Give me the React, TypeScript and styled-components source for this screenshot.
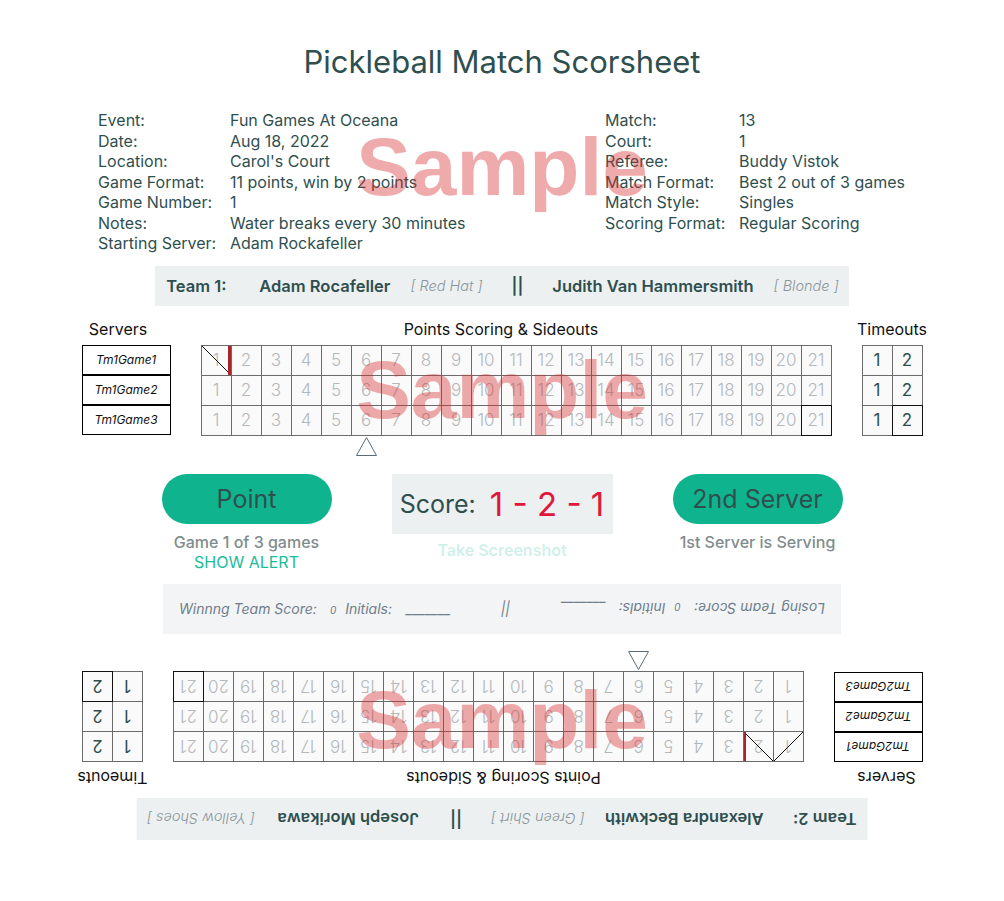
import React from 'react';
import styled, { createGlobalStyle, css } from 'styled-components';

const INK = '#2f4f4f';
const GRID_LINE = '#6b6b6b';

const GlobalStyle = createGlobalStyle`
  * { box-sizing: border-box; }
  html, body { margin: 0; padding: 0; background: #ffffff; }
  body {
    font-family: Inter, "Noto Sans", "Liberation Sans", sans-serif;
    color: ${INK};
  }
`;

const Page = styled.main`
  width: 100%;
  min-height: 901px;
  display: flex;
  flex-direction: column;
  align-items: center;
  padding-top: 42px;
`;

const Title = styled.h1`
  margin: 0;
  font-size: 31px;
  font-weight: 400;
  line-height: 40px;
  color: ${INK};
`;

const Watermark = styled.div<{ $top: number }>`
  position: absolute;
  left: 0;
  right: 0;
  top: ${(p) => p.$top}px;
  text-align: center;
  font-family: "Liberation Sans", Arial, sans-serif;
  font-weight: 700;
  font-size: 82px;
  line-height: 1;
  color: rgba(215, 45, 45, 0.4);
  pointer-events: none;
`;

/* ---------- info ---------- */
const InfoSection = styled.section`
  position: relative;
  align-self: stretch;
  display: grid;
  grid-template-columns: 507px auto;
  padding-left: 98px;
  margin-top: 28px;
`;

const InfoList = styled.dl<{ $labelWidth: number }>`
  margin: 0;
  display: grid;
  grid-template-columns: ${(p) => p.$labelWidth}px auto;
  align-content: start;
  font-size: 16px;
  line-height: 20.5px;
`;

const InfoTerm = styled.dt`
  margin: 0;
`;

const InfoValue = styled.dd`
  margin: 0;
  white-space: nowrap;
`;

/* ---------- team bars ---------- */
const TeamBar = styled.div<{ $flipped?: boolean; $height: number; $gap: number }>`
  display: flex;
  align-items: center;
  height: ${(p) => p.$height}px;
  margin-top: ${(p) => p.$gap}px;
  padding: 0 10px 0 11px;
  background: #ecf0f1;
  font-size: 16.5px;
  white-space: nowrap;
  ${(p) =>
    p.$flipped &&
    css`
      transform: rotate(180deg);
    `}
`;

const TeamLabel = styled.span`
  width: 93px;
  font-weight: 600;
`;

const PlayerName = styled.span<{ $centered?: boolean }>`
  font-weight: 600;
  ${(p) =>
    p.$centered &&
    css`
      min-width: 146px;
      text-align: center;
    `}
`;

const PlayerTag = styled.span`
  margin-left: 20px;
  font-size: 14.5px;
  font-style: italic;
  font-weight: 300;
  color: #8a969b;
`;

const TeamDivider = styled.span`
  margin: 0 29px;
  font-weight: 600;
`;

/* ---------- scoring blocks ---------- */
const BlockWrap = styled.section<{ $gap: number }>`
  position: relative;
  margin-top: ${(p) => p.$gap}px;
`;

const BlockBody = styled.div<{ $flipped?: boolean }>`
  display: flex;
  gap: 30px;
  align-items: flex-start;
  ${(p) =>
    p.$flipped &&
    css`
      transform: rotate(180deg);
    `}
`;

const Column = styled.div`
  display: flex;
  flex-direction: column;
  align-items: flex-start;
`;

const ColumnLabel = styled.div<{ $shift: number }>`
  width: 0;
  min-width: 100%;
  height: 20px;
  line-height: 20px;
  margin-bottom: 6px;
  padding-right: ${(p) => p.$shift * 2}px;
  display: flex;
  justify-content: center;
  white-space: nowrap;
  font-size: 16px;
  color: #111;
`;

const ServerBox = styled.div`
  width: 89px;
  height: 30px;
  border: 1px solid #000;
  display: flex;
  align-items: center;
  justify-content: center;
  font-size: 12px;
  font-style: italic;
  color: #111;
  background: #fff;
`;

const Grid = styled.div<{ $cols: number }>`
  display: grid;
  grid-template-columns: repeat(${(p) => p.$cols}, 30px);
  grid-auto-rows: 30px;
  border-top: 1px solid ${GRID_LINE};
  border-left: 1px solid ${GRID_LINE};
  background: #fafafa;
`;

const Cell = styled.div<{ $dark?: boolean; $strong?: boolean }>`
  position: relative;
  display: flex;
  align-items: center;
  justify-content: center;
  border-right: 1px solid ${GRID_LINE};
  border-bottom: 1px solid ${GRID_LINE};
  font-size: 17px;
  font-weight: ${(p) => (p.$dark ? 400 : 300)};
  color: ${(p) => (p.$dark ? INK : '#b3b8bc')};
  ${(p) =>
    p.$strong &&
    css`
      &::after {
        content: '';
        position: absolute;
        top: -1px;
        left: -1px;
        right: -1px;
        bottom: -1px;
        border: 1px solid #111;
        pointer-events: none;
      }
    `}
`;

const SlashMark = styled.svg`
  position: absolute;
  top: 0;
  left: 0;
  width: 29px;
  height: 29px;
  pointer-events: none;
`;

const SideoutBar = styled.span`
  position: absolute;
  top: 0;
  bottom: 0;
  right: 0;
  width: 2.5px;
  background: #a8262a;
`;

const Pointer = styled.svg<{ $col: number }>`
  display: block;
  margin-top: 1px;
  margin-left: ${(p) => 1 + (p.$col - 1) * 30 + 14.5 - 10.5}px;
`;

/* ---------- actions ---------- */
const ActionRow = styled.section`
  display: flex;
  gap: 60px;
  align-items: flex-start;
  margin-top: 18px;
`;

const ActionCol = styled.div<{ $width: number }>`
  width: ${(p) => p.$width}px;
  display: flex;
  flex-direction: column;
  align-items: center;
`;

const PillButton = styled.button`
  width: 100%;
  height: 50px;
  border: none;
  border-radius: 25px;
  background: #0fb48f;
  color: ${INK};
  font-family: Inter, "Noto Sans", sans-serif;
  font-size: 25px;
  font-weight: 400;
  padding: 0;
  cursor: pointer;
`;

const Caption = styled.div`
  margin-top: 8px;
  font-size: 16px;
  line-height: 20px;
  font-weight: 500;
  color: #7f8c8d;
  white-space: nowrap;
`;

const AlertLink = styled.div`
  font-size: 16px;
  line-height: 20px;
  color: #1abc9c;
`;

const ScoreBox = styled.div`
  width: 100%;
  height: 60px;
  background: #ecf0f1;
  display: flex;
  align-items: center;
  justify-content: center;
  gap: 14px;
`;

const ScoreLabel = styled.span`
  font-size: 25px;
  color: ${INK};
`;

const ScoreValue = styled.span`
  font-size: 33px;
  color: #e0163c;
  white-space: pre;
`;

const ScreenshotLink = styled.div`
  margin-top: 6px;
  font-size: 16px;
  line-height: 20px;
  font-weight: 600;
  color: rgba(26, 188, 156, 0.22);
`;

/* ---------- result bar ---------- */
const ResultBar = styled.section`
  width: 678px;
  height: 50px;
  margin-top: 12px;
  padding: 0 16px;
  background: #f3f4f6;
  display: flex;
  align-items: center;
  justify-content: space-between;
  font-size: 14px;
  font-style: italic;
  color: #6f7e8b;
  white-space: nowrap;
`;

const ResultEntry = styled.div<{ $flipped?: boolean }>`
  display: flex;
  align-items: baseline;
  ${(p) =>
    p.$flipped &&
    css`
      transform: rotate(180deg);
    `}
`;

const TinyScore = styled.span`
  font-size: 10px;
  margin: 0 9px 0 13px;
`;

const InitialsBlank = styled.span`
  margin-left: 14px;
`;

/* ---------- data ---------- */
type Mark = { slash?: 'down' | 'up'; bar?: boolean };

const POINTS = Array.from({ length: 21 }, (_, i) => i + 1);

const topInfoLeft: [string, string][] = [
  ['Event:', 'Fun Games At Oceana'],
  ['Date:', 'Aug 18, 2022'],
  ['Location:', "Carol's Court"],
  ['Game Format:', '11 points, win by 2 points'],
  ['Game Number:', '1'],
  ['Notes:', 'Water breaks every 30 minutes'],
  ['Starting Server:', 'Adam Rockafeller'],
];

const topInfoRight: [string, string][] = [
  ['Match:', '13'],
  ['Court:', '1'],
  ['Referee:', 'Buddy Vistok'],
  ['Match Format:', 'Best 2 out of 3 games'],
  ['Match Style:', 'Singles'],
  ['Scoring Format:', 'Regular Scoring'],
];

function ScoringBlock({
  team,
  marks,
  flipped,
  gap,
  watermarkTop,
}: {
  team: number;
  marks: Record<string, Mark>;
  flipped?: boolean;
  gap: number;
  watermarkTop: number;
}) {
  const rows = [0, 1, 2];
  return (
    <BlockWrap $gap={gap}>
      <BlockBody $flipped={flipped}>
        <Column>
          <ColumnLabel $shift={8}>Servers</ColumnLabel>
          {rows.map((r) => (
            <ServerBox key={r}>{`Tm${team}Game${r + 1}`}</ServerBox>
          ))}
        </Column>
        <Column>
          <ColumnLabel $shift={15}>Points Scoring &amp; Sideouts</ColumnLabel>
          <Grid $cols={21}>
            {rows.map((r) =>
              POINTS.map((n) => {
                const mark = marks[`${r}-${n}`];
                return (
                  <Cell key={`${r}-${n}`} $strong={r === 2 && n === 21}>
                    {n}
                    {mark?.slash && (
                      <SlashMark viewBox="0 0 29 29">
                        {mark.slash === 'down' ? (
                          <line x1="0" y1="0" x2="29" y2="29" stroke="#111" strokeWidth="1" />
                        ) : (
                          <line x1="0" y1="29" x2="29" y2="0" stroke="#111" strokeWidth="1" />
                        )}
                      </SlashMark>
                    )}
                    {mark?.bar && <SideoutBar />}
                  </Cell>
                );
              })
            )}
          </Grid>
          <Pointer $col={6} width="21" height="19" viewBox="0 0 21 19">
            <polygon points="10.5,0.5 20.5,18.5 0.5,18.5" fill="#fff" stroke="#5b6b78" strokeWidth="1" />
          </Pointer>
        </Column>
        <Column>
          <ColumnLabel $shift={0}>Timeouts</ColumnLabel>
          <Grid $cols={2}>
            {rows.map((r) =>
              [1, 2].map((n) => (
                <Cell key={`${r}-${n}`} $dark $strong={r === 2 && n === 2}>
                  {n}
                </Cell>
              ))
            )}
          </Grid>
        </Column>
      </BlockBody>
      <Watermark $top={watermarkTop}>Sample</Watermark>
    </BlockWrap>
  );
}

export default function App() {
  return (
    <>
      <GlobalStyle />
      <Page>
        <Title>Pickleball Match Scorsheet</Title>

        <InfoSection>
          <InfoList $labelWidth={132}>
            {topInfoLeft.map(([k, v]) => (
              <React.Fragment key={k}>
                <InfoTerm>{k}</InfoTerm>
                <InfoValue>{v}</InfoValue>
              </React.Fragment>
            ))}
          </InfoList>
          <InfoList $labelWidth={134}>
            {topInfoRight.map(([k, v]) => (
              <React.Fragment key={k}>
                <InfoTerm>{k}</InfoTerm>
                <InfoValue>{v}</InfoValue>
              </React.Fragment>
            ))}
          </InfoList>
          <Watermark $top={16}>Sample</Watermark>
        </InfoSection>

        <TeamBar $height={40} $gap={12}>
          <TeamLabel>Team 1:</TeamLabel>
          <PlayerName>Adam Rocafeller</PlayerName>
          <PlayerTag>[ Red Hat ]</PlayerTag>
          <TeamDivider>||</TeamDivider>
          <PlayerName $centered>Judith Van Hammersmith</PlayerName>
          <PlayerTag>[ Blonde ]</PlayerTag>
        </TeamBar>

        <ScoringBlock
          team={1}
          gap={13}
          watermarkTop={30}
          marks={{ '0-1': { slash: 'down', bar: true } }}
        />

        <ActionRow>
          <ActionCol $width={170}>
            <PillButton>Point</PillButton>
            <Caption>Game 1 of 3 games</Caption>
            <AlertLink>SHOW ALERT</AlertLink>
          </ActionCol>
          <ActionCol $width={221}>
            <ScoreBox>
              <ScoreLabel>Score:</ScoreLabel>
              <ScoreValue>1 - 2 - 1</ScoreValue>
            </ScoreBox>
            <ScreenshotLink>Take Screenshot</ScreenshotLink>
          </ActionCol>
          <ActionCol $width={170}>
            <PillButton>2nd Server</PillButton>
            <Caption>1st Server is Serving</Caption>
          </ActionCol>
        </ActionRow>

        <ResultBar>
          <ResultEntry>
            Winnng Team Score:<TinyScore>0</TinyScore>Initials:<InitialsBlank>_______</InitialsBlank>
          </ResultEntry>
          <span>||</span>
          <ResultEntry $flipped>
            Losing Team Score:<TinyScore>0</TinyScore>Initials:<InitialsBlank>_______</InitialsBlank>
          </ResultEntry>
        </ResultBar>

        <ScoringBlock
          team={2}
          gap={17}
          flipped
          watermarkTop={28}
          marks={{ '0-1': { slash: 'up' }, '0-2': { slash: 'down', bar: true } }}
        />

        <TeamBar $height={42} $gap={10} $flipped>
          <TeamLabel>Team 2:</TeamLabel>
          <PlayerName>Alexandra Beckwith</PlayerName>
          <PlayerTag>[ Green Shirt ]</PlayerTag>
          <TeamDivider>||</TeamDivider>
          <PlayerName $centered>Joseph Morikawa</PlayerName>
          <PlayerTag>[ Yellow Shoes ]</PlayerTag>
        </TeamBar>
      </Page>
    </>
  );
}
